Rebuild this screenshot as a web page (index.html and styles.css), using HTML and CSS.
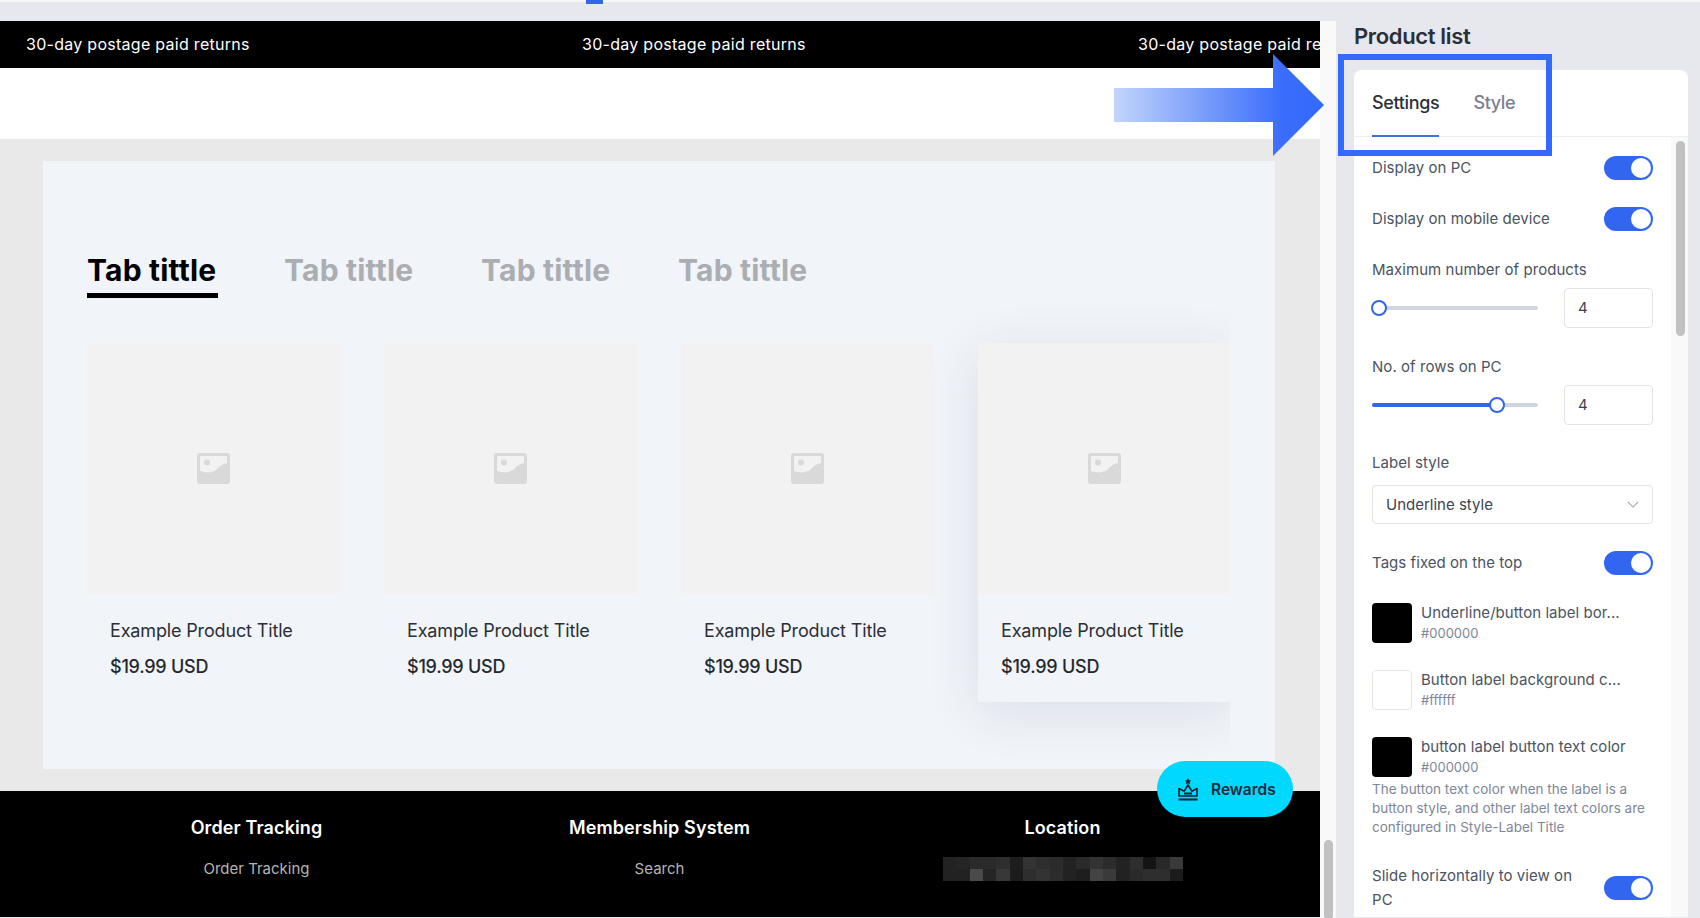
FILE: index.html
```html
<!DOCTYPE html>
<html lang="en">
<head>
    <meta charset="UTF-8">
    <meta name="viewport" content="width=device-width, initial-scale=1.0">
    <title>Product list - Theme editor</title>
    <link rel="stylesheet" href="styles.css">
</head>
<body>
    <div class="progress-mark"></div>

    <main class="preview">
        <div class="announce">
            <span class="announce-item">30-day postage paid returns</span>
            <span class="announce-item">30-day postage paid returns</span>
            <span class="announce-item">30-day postage paid returns</span>
        </div>
        <div class="store-header"></div>

        <div class="store-body">
            <section class="product-section">
                <div class="tabs">
                    <span class="tab active">Tab tittle</span>
                    <span class="tab">Tab tittle</span>
                    <span class="tab">Tab tittle</span>
                    <span class="tab">Tab tittle</span>
                </div>
                <div class="product-grid">
                    <article class="product">
                        <div class="product-img">
                            <svg class="img-icon" viewBox="0 0 33 31"><rect width="33" height="31" rx="3" fill="#d9d9d9"/><path d="M3 3h27v7c-5 1-8 4-11 7-4 3-10 3-16 1z" fill="#f2f2f2"/><circle cx="10" cy="9.5" r="3" fill="#d9d9d9"/></svg>
                        </div>
                        <div class="product-info">
                            <div class="product-title">Example Product Title</div>
                            <div class="product-price">$19.99 USD</div>
                        </div>
                    </article>
                    <article class="product">
                        <div class="product-img">
                            <svg class="img-icon" viewBox="0 0 33 31"><rect width="33" height="31" rx="3" fill="#d9d9d9"/><path d="M3 3h27v7c-5 1-8 4-11 7-4 3-10 3-16 1z" fill="#f2f2f2"/><circle cx="10" cy="9.5" r="3" fill="#d9d9d9"/></svg>
                        </div>
                        <div class="product-info">
                            <div class="product-title">Example Product Title</div>
                            <div class="product-price">$19.99 USD</div>
                        </div>
                    </article>
                    <article class="product">
                        <div class="product-img">
                            <svg class="img-icon" viewBox="0 0 33 31"><rect width="33" height="31" rx="3" fill="#d9d9d9"/><path d="M3 3h27v7c-5 1-8 4-11 7-4 3-10 3-16 1z" fill="#f2f2f2"/><circle cx="10" cy="9.5" r="3" fill="#d9d9d9"/></svg>
                        </div>
                        <div class="product-info">
                            <div class="product-title">Example Product Title</div>
                            <div class="product-price">$19.99 USD</div>
                        </div>
                    </article>
                    <article class="product hovered">
                        <div class="product-img">
                            <svg class="img-icon" viewBox="0 0 33 31"><rect width="33" height="31" rx="3" fill="#d9d9d9"/><path d="M3 3h27v7c-5 1-8 4-11 7-4 3-10 3-16 1z" fill="#f2f2f2"/><circle cx="10" cy="9.5" r="3" fill="#d9d9d9"/></svg>
                        </div>
                        <div class="product-info">
                            <div class="product-title">Example Product Title</div>
                            <div class="product-price">$19.99 USD</div>
                        </div>
                    </article>
                </div>
            </section>
        </div>

        <footer class="store-footer">
            <div class="footer-col">
                <div class="footer-title">Order Tracking</div>
                <div class="footer-link">Order Tracking</div>
            </div>
            <div class="footer-col">
                <div class="footer-title">Membership System</div>
                <div class="footer-link">Search</div>
            </div>
            <div class="footer-col">
                <div class="footer-title">Location</div>
                <svg class="mosaic" viewBox="0 0 18 2" preserveAspectRatio="none" shape-rendering="crispEdges">
                    <rect x="0" y="0" width="1" height="1" fill="#222"/><rect x="1" y="0" width="1" height="1" fill="#252525"/><rect x="2" y="0" width="1" height="1" fill="#2a2a2a"/><rect x="3" y="0" width="1" height="1" fill="#2a2a2a"/><rect x="4" y="0" width="1" height="1" fill="#2e2e2e"/><rect x="5" y="0" width="1" height="1" fill="#1d1d1d"/><rect x="6" y="0" width="1" height="1" fill="#333"/><rect x="7" y="0" width="1" height="1" fill="#2e2e2e"/><rect x="8" y="0" width="1" height="1" fill="#2b2b2b"/><rect x="9" y="0" width="1" height="1" fill="#222"/><rect x="10" y="0" width="1" height="1" fill="#2a2a2a"/><rect x="11" y="0" width="1" height="1" fill="#333"/><rect x="12" y="0" width="1" height="1" fill="#2c2c2c"/><rect x="13" y="0" width="1" height="1" fill="#222"/><rect x="14" y="0" width="1" height="1" fill="#2e2e2e"/><rect x="15" y="0" width="1" height="1" fill="#141414"/><rect x="16" y="0" width="1" height="1" fill="#282828"/><rect x="17" y="0" width="1" height="1" fill="#3a3a3a"/>
                    <rect x="0" y="1" width="1" height="1" fill="#222"/><rect x="1" y="1" width="1" height="1" fill="#222"/><rect x="2" y="1" width="1" height="1" fill="#4a4a4a"/><rect x="3" y="1" width="1" height="1" fill="#252525"/><rect x="4" y="1" width="1" height="1" fill="#383838"/><rect x="5" y="1" width="1" height="1" fill="#1c1c1c"/><rect x="6" y="1" width="1" height="1" fill="#2e2e2e"/><rect x="7" y="1" width="1" height="1" fill="#333"/><rect x="8" y="1" width="1" height="1" fill="#2c2c2c"/><rect x="9" y="1" width="1" height="1" fill="#222"/><rect x="10" y="1" width="1" height="1" fill="#1e1e1e"/><rect x="11" y="1" width="1" height="1" fill="#444"/><rect x="12" y="1" width="1" height="1" fill="#3a3a3a"/><rect x="13" y="1" width="1" height="1" fill="#222"/><rect x="14" y="1" width="1" height="1" fill="#2a2a2a"/><rect x="15" y="1" width="1" height="1" fill="#2e2e2e"/><rect x="16" y="1" width="1" height="1" fill="#2e2e2e"/><rect x="17" y="1" width="1" height="1" fill="#1c1c1c"/>
                </svg>
            </div>
        </footer>

        <div class="rewards">
            <svg class="rewards-icon" viewBox="0 0 20 23" fill="none" stroke="#14202e" stroke-width="1.6"><path d="M10 0l1 2.200 2.300.3-1.700 1.600.5 2.300-2.100-1.100-2.100 1.100.5-2.300-1.700-1.600 2.300-.3z" fill="#14202e" stroke="none"/><path d="M10 7l3.800 6.200L19 10.500V18H1v-7.500l5.200 2.700z" stroke-linejoin="round"/><path d="M6 15.500h8M0.500 21.500h19" stroke-width="2"/></svg>
            <span>Rewards</span>
        </div>
    </main>

    <div class="page-scroll"><div class="page-thumb"></div></div>

    <aside class="panel">
        <h2 class="panel-title">Product list</h2>
        <div class="panel-card">
            <div class="panel-tabs">
                <span class="panel-tab active">Settings</span>
                <span class="panel-tab">Style</span>
            </div>
            <div class="panel-body">
                <div class="settings">
                    <div class="toggle-row">
                        <span class="field-label">Display on PC</span>
                        <span class="toggle"></span>
                    </div>
                    <div class="toggle-row gap-md">
                        <span class="field-label">Display on mobile device</span>
                        <span class="toggle"></span>
                    </div>

                    <div class="field-label block gap-lg">Maximum number of products</div>
                    <div class="slider-row">
                        <div class="slider"><div class="slider-fill" style="width: 0%"></div><span class="slider-knob" style="left: 7px"></span></div>
                        <div class="num-input">4</div>
                    </div>

                    <div class="field-label block gap-lg">No. of rows on PC</div>
                    <div class="slider-row">
                        <div class="slider"><div class="slider-fill" style="width: 75%"></div><span class="slider-knob" style="left: 125px"></span></div>
                        <div class="num-input">4</div>
                    </div>

                    <div class="field-label block gap-sm">Label style</div>
                    <div class="select">
                        <span>Underline style</span>
                        <svg class="chevron" viewBox="0 0 12 7" fill="none" stroke="#a8aeb9" stroke-width="1.2"><path d="M.8.8L6 6l5.200-5.200"/></svg>
                    </div>

                    <div class="toggle-row gap-md">
                        <span class="field-label">Tags fixed on the top</span>
                        <span class="toggle"></span>
                    </div>

                    <div class="color-row first">
                        <span class="swatch black"></span>
                        <div class="color-text">
                            <div class="color-name">Underline/button label bor...</div>
                            <div class="color-value">#000000</div>
                        </div>
                    </div>
                    <div class="color-row">
                        <span class="swatch"></span>
                        <div class="color-text">
                            <div class="color-name">Button label background c...</div>
                            <div class="color-value">#ffffff</div>
                        </div>
                    </div>
                    <div class="color-row">
                        <span class="swatch black"></span>
                        <div class="color-text">
                            <div class="color-name">button label button text color</div>
                            <div class="color-value">#000000</div>
                        </div>
                    </div>
                    <p class="hint">The button text color when the label is a button style, and other label text colors are configured in Style-Label Title</p>

                    <div class="toggle-row wrap-row">
                        <span class="field-label">Slide horizontally to view on PC</span>
                        <span class="toggle"></span>
                    </div>
                </div>
                <div class="panel-scroll"><div class="panel-thumb"></div></div>
            </div>
        </div>
    </aside>

    <!-- annotation drawn over the screenshot -->
    <div class="callout-box"></div>
    <svg class="callout-arrow" viewBox="0 0 210 102">
        <defs>
            <linearGradient id="arrow-fade" x1="0" x2="1" y1="0" y2="0">
                <stop offset="0" stop-color="#c2d5fb"/>
                <stop offset="0.8" stop-color="#3a6dfb"/>
                <stop offset="1" stop-color="#3369fd"/>
            </linearGradient>
        </defs>
        <path d="M0 34h159V0l51 51-51 51V68H0z" fill="url(#arrow-fade)"/>
    </svg>
</body>
</html>
```

FILE: styles.css
```css
* {
    box-sizing: border-box;
}

html, body {
    height: 100%;
}

body {
    margin: 0;
    display: flex;
    height: 918px;
    overflow: hidden;
    background-color: #e6e8ee;
    border-top: 2px solid #f5f6f8;
    font-family: "Inter", "Liberation Sans", sans-serif;
}

.progress-mark {
    position: absolute;
    left: 586px;
    top: 0;
    width: 17px;
    height: 4px;
    background-color: #3366e8;
}

/* store preview */
.preview {
    position: relative;
    width: 1320px;
    flex-shrink: 0;
    margin-top: 19px;
    height: 896px;
    overflow: hidden;
    display: flex;
    flex-direction: column;
}

.announce {
    display: flex;
    height: 47px;
    flex-shrink: 0;
    align-items: center;
    padding: 0 0 1px 26px;
    background-color: #000;
    color: #fff;
    font-size: 16px;
    letter-spacing: 0.28px;
    white-space: nowrap;
}

.announce-item {
    width: 556px;
    flex-shrink: 0;
}

.store-header {
    height: 71px;
    flex-shrink: 0;
    background-color: #fff;
}

.store-body {
    height: 652px;
    flex-shrink: 0;
    padding: 22px 45px 22px 43px;
    background-color: #e9e9e9;
}

.product-section {
    height: 608px;
    padding: 93px 45px 0 44px;
    background-color: #f1f4f9;
}

.tabs {
    display: flex;
    gap: 66px;
}

.tab {
    width: 131px;
    height: 44px;
    padding-top: 1px;
    font-size: 30px;
    font-weight: 700;
    line-height: 30px;
    letter-spacing: 0.2px;
    white-space: nowrap;
    color: #aaaeb3;
}

.tab.active {
    color: #000;
    border-bottom: 5px solid #000;
}

.product-grid {
    display: grid;
    grid-template-columns: repeat(4, 253px);
    gap: 44px;
    margin-top: 45px;
    clip-path: inset(-80px 0 -80px -80px);
}

.product-img {
    height: 251px;
    display: flex;
    align-items: center;
    justify-content: center;
    background-color: #f2f2f2;
}

.img-icon {
    width: 33px;
    height: 31px;
}

.product {
    height: 359px;
}

.product.hovered {
    box-shadow: 0 10px 50px rgba(50, 65, 90, 0.11);
}

.product-info {
    padding: 26px 23px 0;
}

.product-title {
    font-size: 18px;
    line-height: 22px;
    letter-spacing: -0.15px;
    color: #2b2f36;
}

.product-price {
    margin-top: 13.5px;
    font-size: 18px;
    line-height: 22px;
    letter-spacing: -0.25px;
    font-weight: 500;
    color: #24282e;
}

.store-footer {
    flex: 1;
    display: grid;
    grid-template-columns: repeat(3, 403px);
    padding: 25px 0 0 55px;
    background-color: #000;
    color: #fff;
    text-align: center;
}

.footer-title {
    font-size: 18px;
    font-weight: 600;
    line-height: 24px;
    letter-spacing: 0.12px;
}

.footer-link {
    margin-top: 18px;
    font-size: 15px;
    line-height: 22px;
    color: #b5b5b5;
}

.mosaic {
    display: block;
    width: 240px;
    height: 24px;
    margin: 17px auto 0;
}

.rewards {
    position: absolute;
    left: 1157px;
    top: 740px;
    width: 136px;
    height: 56px;
    display: flex;
    align-items: center;
    gap: 13px;
    padding-left: 21px;
    border-radius: 28px;
    background-color: #00d8ff;
    color: #1f2a3a;
    font-size: 15.5px;
    font-weight: 600;
}

.rewards-icon {
    width: 20px;
    height: 23px;
}

.page-scroll {
    position: relative;
    width: 16px;
    flex-shrink: 0;
    margin-top: 19px;
    background-color: #f9f9f9;
}

.page-thumb {
    position: absolute;
    left: 4px;
    top: 819px;
    width: 9px;
    height: 80px;
    border-radius: 5px;
    background-color: #c1c1c1;
}

/* settings panel */
.panel {
    flex: 1;
    padding: 0 12px 0 18px;
}

.panel-title {
    margin: 20px 0 0;
    font-size: 22px;
    line-height: 28px;
    font-weight: 600;
    letter-spacing: -0.35px;
    color: #2a2f3a;
}

.panel-card {
    margin-top: 20px;
    border-radius: 8px 8px 0 0;
    background-color: #fff;
}

.panel-tabs {
    display: flex;
    gap: 34px;
    height: 67px;
    padding: 19px 18px 0;
    border-bottom: 1px solid #eeeff2;
}

.panel-tab {
    height: 48px;
    font-size: 18px;
    line-height: 27px;
    font-weight: 500;
    letter-spacing: -0.35px;
    color: #7a8090;
}

.panel-tab.active {
    color: #2a2f3a;
    border-bottom: 2px solid #3f6fe0;
}

.panel-body {
    display: flex;
    height: 780px;
    overflow: hidden;
}

.settings {
    width: 317px;
    flex-shrink: 0;
    padding: 19px 18px 0;
}

.panel-scroll {
    position: relative;
    flex: 1;
    background-color: #f9f9f9;
}

.panel-thumb {
    position: absolute;
    left: 5px;
    top: 4px;
    width: 9px;
    height: 195px;
    border-radius: 5px;
    background-color: #c1c1c1;
}

.field-label {
    font-size: 15px;
    line-height: 24px;
    letter-spacing: 0.05px;
    color: #4b5362;
}

.field-label.block {
    line-height: 20px;
}

.gap-sm {
    margin-top: 28px;
}

.gap-md {
    margin-top: 27px;
}

.gap-lg {
    margin-top: 29px;
}

.toggle-row {
    display: flex;
    align-items: center;
    justify-content: space-between;
}

.wrap-row {
    margin-top: 27px;
    gap: 30px;
}

.toggle {
    position: relative;
    width: 49px;
    height: 24px;
    flex-shrink: 0;
    border-radius: 12px;
    background-color: #3366f0;
}

.toggle::after {
    content: "";
    position: absolute;
    right: 2px;
    top: 2px;
    width: 20px;
    height: 20px;
    border-radius: 50%;
    background-color: #fff;
}

.slider-row {
    display: flex;
    align-items: center;
    justify-content: space-between;
    margin-top: 8px;
}

.slider {
    position: relative;
    width: 166px;
    height: 4px;
    border-radius: 2px;
    background-color: #d0d6e0;
}

.slider-fill {
    height: 100%;
    border-radius: 2px;
    background-color: #3366e8;
}

.slider-knob {
    position: absolute;
    top: -6px;
    width: 16px;
    height: 16px;
    margin-left: -8px;
    border: 2.5px solid #3366e8;
    border-radius: 50%;
    background-color: #fff;
}

.num-input {
    width: 89px;
    height: 40px;
    padding-left: 13px;
    border: 1.5px solid #e1e4ea;
    border-radius: 4px;
    font-size: 15px;
    line-height: 37px;
    color: #3c4350;
}

.select {
    display: flex;
    align-items: center;
    justify-content: space-between;
    height: 39px;
    margin-top: 12px;
    padding: 0 13px;
    border: 1.5px solid #e1e4ea;
    border-radius: 4px;
    font-size: 15px;
    color: #3c4350;
}

.chevron {
    width: 12px;
    height: 7px;
}

.color-row {
    display: flex;
    gap: 9px;
    margin-top: 27px;
}

.color-row.first {
    margin-top: 28px;
}

.swatch {
    width: 40px;
    height: 40px;
    flex-shrink: 0;
    border: 1.5px solid #e1e4ea;
    border-radius: 4px;
    background-color: #fff;
}

.swatch.black {
    border: none;
    background-color: #000;
}

.color-name {
    font-size: 15px;
    line-height: 20px;
    letter-spacing: 0.05px;
    color: #4b5362;
}

.color-value {
    margin-top: 1px;
    font-size: 13px;
    line-height: 19px;
    color: #7e8798;
}

.hint {
    margin: 3px 0 0;
    font-size: 13.5px;
    line-height: 19px;
    color: #7e8798;
}

/* annotation */
.callout-box {
    position: absolute;
    left: 1338px;
    top: 54px;
    width: 214px;
    height: 102px;
    border: 6px solid #3369fd;
}

.callout-arrow {
    position: absolute;
    left: 1114px;
    top: 54px;
    width: 210px;
    height: 102px;
}
```
